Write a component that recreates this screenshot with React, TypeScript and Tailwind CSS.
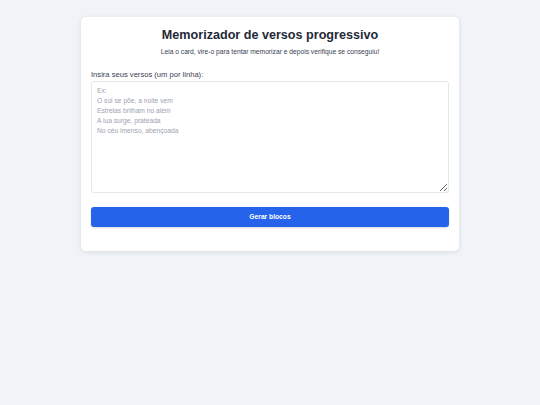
export default function App() {
  return (
    <div className="min-h-[405px] w-full bg-[#f0f4f8] pt-[17px] font-['Liberation_Sans',Arial,sans-serif]">
      <div className="mx-auto w-[378px] rounded-[5px] bg-white px-[10px] pb-[24px] pt-[9px] shadow-[0_1px_5px_rgba(0,0,0,0.1)]">
        <h1 className="text-center text-[12.6px] font-bold leading-[18px] text-[#1f2937]">
          Memorizador de versos progressivo
        </h1>
        <p className="mt-[3px] text-center text-[6.7px] leading-[9px] text-[#374151]">
          Leia o card, vire-o para tentar memorizar e depois verifique se conseguiu!
        </p>
        <label className="mt-[14px] block text-[7.6px] leading-[10px] text-[#374151]">
          Insira seus versos (um por linha):
        </label>
        <textarea
          className="mt-[1px] block h-[112px] w-full rounded-[3px] border border-[#e5e7eb] px-[5px] py-[4px] text-[6.7px] leading-[10px] text-[#374151] placeholder:text-[#9ca3af] outline-none"
          placeholder={"Ex:\nO sol se põe, a noite vem\nEstrelas brilham no além\nA lua surge, prateada\nNo céu imenso, abençoada"}
        />
        <button
          type="button"
          className="mt-[14px] block h-[20px] w-full rounded-[3px] bg-[#2563eb] text-[6.7px] font-bold text-white shadow-[0_1px_2px_rgba(0,0,0,0.15)]"
        >
          Gerar blocos
        </button>
      </div>
    </div>
  );
}
